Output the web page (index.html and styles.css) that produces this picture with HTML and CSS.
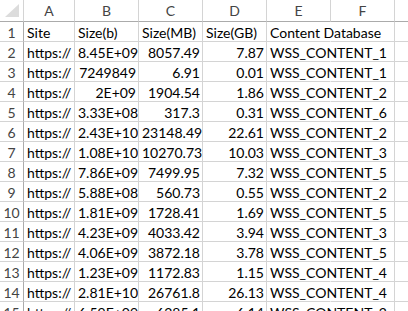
FILE: index.html
```html
<!DOCTYPE html>
<html>
<head>
<meta charset="utf-8">
<link rel="stylesheet" href="styles.css">
</head>
<body>
<div class="sheet">
  <div class="corner"><svg width="16" height="14" viewBox="0 0 16 14"><polygon points="15,0 15,13 1,13" fill="#dcdcdc"/></svg></div>
  <div class="colhead">A</div><div class="colhead">B</div><div class="colhead">C</div><div class="colhead">D</div><div class="colhead">E</div><div class="colhead">F</div><div class="colhead last"></div>

  <div class="rowhead">1</div><div class="c">Site</div><div class="c">Size(b)</div><div class="c">Size(MB)</div><div class="c">Size(GB)</div><div class="c ov">Content Database</div><div class="c"></div><div class="c last"></div>

  <div class="rowhead">2</div><div class="c">https://</div><div class="c n">8.45E+09</div><div class="c n">8057.49</div><div class="c n">7.87</div><div class="c ov">WSS_CONTENT_1</div><div class="c"></div><div class="c last"></div>
  <div class="rowhead">3</div><div class="c">https://</div><div class="c n">7249849</div><div class="c n">6.91</div><div class="c n">0.01</div><div class="c ov">WSS_CONTENT_1</div><div class="c"></div><div class="c last"></div>
  <div class="rowhead">4</div><div class="c">https://</div><div class="c n">2E+09</div><div class="c n">1904.54</div><div class="c n">1.86</div><div class="c ov">WSS_CONTENT_2</div><div class="c"></div><div class="c last"></div>
  <div class="rowhead">5</div><div class="c">https://</div><div class="c n">3.33E+08</div><div class="c n">317.3</div><div class="c n">0.31</div><div class="c ov">WSS_CONTENT_6</div><div class="c"></div><div class="c last"></div>
  <div class="rowhead">6</div><div class="c">https://</div><div class="c n">2.43E+10</div><div class="c n">23148.49</div><div class="c n">22.61</div><div class="c ov">WSS_CONTENT_2</div><div class="c"></div><div class="c last"></div>
  <div class="rowhead">7</div><div class="c">https://</div><div class="c n">1.08E+10</div><div class="c n">10270.73</div><div class="c n">10.03</div><div class="c ov">WSS_CONTENT_3</div><div class="c"></div><div class="c last"></div>
  <div class="rowhead">8</div><div class="c">https://</div><div class="c n">7.86E+09</div><div class="c n">7499.95</div><div class="c n">7.32</div><div class="c ov">WSS_CONTENT_5</div><div class="c"></div><div class="c last"></div>
  <div class="rowhead">9</div><div class="c">https://</div><div class="c n">5.88E+08</div><div class="c n">560.73</div><div class="c n">0.55</div><div class="c ov">WSS_CONTENT_2</div><div class="c"></div><div class="c last"></div>
  <div class="rowhead">10</div><div class="c">https://</div><div class="c n">1.81E+09</div><div class="c n">1728.41</div><div class="c n">1.69</div><div class="c ov">WSS_CONTENT_5</div><div class="c"></div><div class="c last"></div>
  <div class="rowhead">11</div><div class="c">https://</div><div class="c n">4.23E+09</div><div class="c n">4033.42</div><div class="c n">3.94</div><div class="c ov">WSS_CONTENT_3</div><div class="c"></div><div class="c last"></div>
  <div class="rowhead">12</div><div class="c">https://</div><div class="c n">4.06E+09</div><div class="c n">3872.18</div><div class="c n">3.78</div><div class="c ov">WSS_CONTENT_5</div><div class="c"></div><div class="c last"></div>
  <div class="rowhead">13</div><div class="c">https://</div><div class="c n">1.23E+09</div><div class="c n">1172.83</div><div class="c n">1.15</div><div class="c ov">WSS_CONTENT_4</div><div class="c"></div><div class="c last"></div>
  <div class="rowhead">14</div><div class="c">https://</div><div class="c n">2.81E+10</div><div class="c n">26761.8</div><div class="c n">26.13</div><div class="c ov">WSS_CONTENT_4</div><div class="c"></div><div class="c last"></div>
  <div class="rowhead">15</div><div class="c">https://</div><div class="c n">6.59E+09</div><div class="c n">6285.1</div><div class="c n">6.14</div><div class="c ov">WSS_CONTENT_2</div><div class="c"></div><div class="c last"></div>
</div>
</body>
</html>
```
FILE: styles.css
```css
html, body {
  margin: 0;
  padding: 0;
  background: #ffffff;
  overflow: hidden;
  width: 408px;
  height: 311px;
}
.sheet {
  display: grid;
  width: 408px;
  grid-template-columns: 24px 51px 64px 64px 64px 64px 64px minmax(0, 1fr);
  grid-template-rows: 22px;
  grid-auto-rows: 20px;
  font-family: Lato, "Liberation Sans", sans-serif;
  font-size: 14px;
  color: #000;
}
.corner {
  background: #ffffff;
  border-right: 1px solid #d4d4d4;
  border-bottom: 1px solid #ababab;
  display: flex;
  align-items: flex-end;
  justify-content: flex-end;
  padding: 0 3px 3px 0;
  box-sizing: border-box;
}
.corner svg { display: block; }
.colhead {
  background: #ffffff;
  color: #444444;
  font-size: 14px;
  text-align: center;
  line-height: 21px;
  border-right: 1px solid #d4d4d4;
  border-bottom: 1px solid #ababab;
  box-sizing: border-box;
}
.rowhead {
  color: #444444;
  font-size: 14px;
  text-align: center;
  padding-top: 2px;
  line-height: 18px;
  border-right: 1px solid #ababab;
  border-bottom: 1px solid #d4d4d4;
  box-sizing: border-box;
}
.c {
  border-right: 1px solid #d4d4d4;
  border-bottom: 1px solid #d4d4d4;
  box-sizing: border-box;
  padding: 2px 2px 0 3px;
  line-height: 18px;
  white-space: nowrap;
  overflow: hidden;
  background: #fff;
}
.c.n { text-align: right; padding-right: 2px; }
.c.ov { overflow: visible; position: relative; z-index: 1; background: transparent; border-right-color: transparent; }
.last { border-right: none; }
```
